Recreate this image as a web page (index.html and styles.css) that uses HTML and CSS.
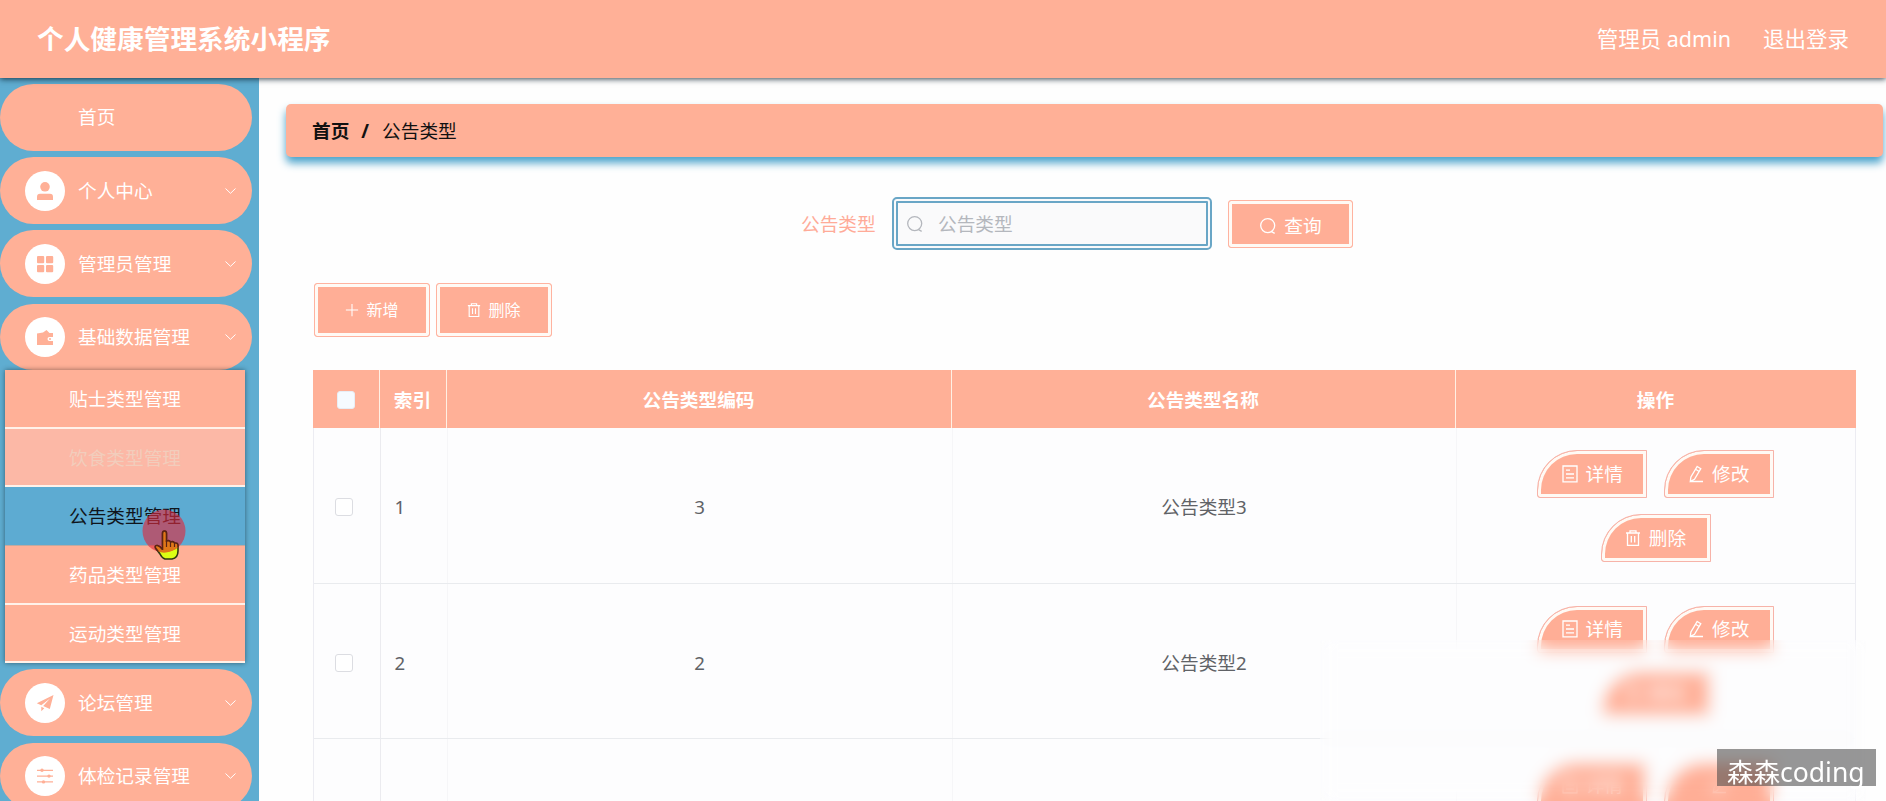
FILE: index.html
```
<!DOCTYPE html>
<html lang="zh-CN">
<head>
<meta charset="utf-8">
<title>个人健康管理系统小程序</title>
<link rel="stylesheet" href="styles.css">
</head>
<body>
<svg class="defs" width="0" height="0">
  <symbol id="down" viewBox="0 0 12 8"><path d="M1 1.500l5 4.800 5-4.800" fill="none" stroke="currentColor" stroke-width="1"/></symbol>
  <symbol id="search" viewBox="0 0 18 18"><circle cx="8.700" cy="8.600" r="7" fill="none" stroke="currentColor" stroke-width="1.300"/><path d="M12.500 14.700l3.200 1.600" stroke="currentColor" stroke-width="1.400"/></symbol>
  <symbol id="trash" viewBox="0 0 16 18"><path d="M1 4h14M5 4V1.800h6V4M2.500 4v12.400h11V4M6.300 7v6.500M9.700 7v6.500" fill="none" stroke="currentColor" stroke-width="1.300"/></symbol>
  <symbol id="doc" viewBox="0 0 16 18"><path d="M1 1h14v15.800H1zM4 5.200h4M4 9h8M4 12.800h8" fill="none" stroke="currentColor" stroke-width="1.300"/></symbol>
  <symbol id="edit" viewBox="0 0 16 18"><path d="M9.200 1.500l3.600 2.200-6.300 10.600-4.200 2 .6-4.300zM7.600 4.200l3.600 2.300M2 16.500h13" fill="none" stroke="currentColor" stroke-width="1.300"/></symbol>
</svg>
<header class="header">
  <h1 class="brand">个人健康管理系统小程序</h1>
  <div class="account"><span>管理员 admin</span><span>退出登录</span></div>
</header>
<div class="body">
  <nav class="sidebar">
    <a class="item"><span class="badge empty"></span><span class="name">首页</span></a>
    <a class="item"><span class="badge"><svg viewBox="0 0 18 18"><circle cx="9" cy="4.800" r="4.800"/><path d="M1 18v-3.200q0-3 3-3h10q3 0 3 3V18z"/></svg></span><span class="name">个人中心</span><svg class="arrow"><use href="#down"/></svg></a>
    <a class="item"><span class="badge"><svg viewBox="0 0 18 18"><rect x="1" y="1" width="7.200" height="7.200" rx="1"/><rect x="10" y="1" width="7.200" height="7.200" rx="1"/><rect x="1" y="10" width="7.200" height="7.200" rx="1"/><rect x="10" y="10" width="7.200" height="7.200" rx="1"/></svg></span><span class="name">管理员管理</span><svg class="arrow"><use href="#down"/></svg></a>
    <a class="item"><span class="badge"><svg viewBox="0 0 18 18"><path d="M1 5.500l6-1L10.500 2l3 3H17v4h-3.500a2 2 0 0 0 0 4H17v4H1z"/><circle cx="14" cy="11" r="1"/></svg></span><span class="name">基础数据管理</span><svg class="arrow"><use href="#down"/></svg></a>
    <div class="submenu">
      <a class="sub">贴士类型管理</a>
      <a class="sub fading">饮食类型管理</a>
      <a class="sub active">公告类型管理</a>
      <a class="sub">药品类型管理</a>
      <a class="sub">运动类型管理</a>
    </div>
    <a class="item"><span class="badge"><svg viewBox="0 0 18 18"><path d="M17.500 1L.8 9.300l4.500 2L14 4.500 7.200 12l6.600 3zM5.300 12.700v4.500l3-3z"/></svg></span><span class="name">论坛管理</span><svg class="arrow"><use href="#down"/></svg></a>
    <a class="item"><span class="badge"><svg viewBox="0 0 18 18"><path d="M1 2.700h16v1.200H1zM1 8.500h16v1.200H1zM1 14.300h16v1.200H1z"/><circle cx="6" cy="3.300" r="1.700"/><circle cx="13" cy="9.100" r="1.700"/><circle cx="7.500" cy="14.900" r="1.700"/></svg></span><span class="name">体检记录管理</span><svg class="arrow"><use href="#down"/></svg></a>
  </nav>
  <main class="main">
    <div class="crumbs"><b>首页</b><b class="slash">/</b><span>公告类型</span></div>
    <div class="filter">
      <label class="label">公告类型</label>
      <div class="field"><svg class="glyph"><use href="#search"/></svg><span>公告类型</span></div>
      <button class="btn query"><svg class="glyph"><use href="#search"/></svg>查询</button>
    </div>
    <div class="tools">
      <button class="btn tool"><svg class="ic" viewBox="0 0 16 16"><path d="M8 1v14M1 8h14" stroke="currentColor" stroke-width="1.200"/></svg>新增</button>
      <button class="btn tool"><svg class="ic"><use href="#trash"/></svg>删除</button>
    </div>
    <div class="table">
      <div class="row head"><div><i class="check"></i></div><div>索引</div><div>公告类型编码</div><div>公告类型名称</div><div>操作</div></div>
      <div class="row">
        <div><i class="check"></i></div><div class="index">1</div><div>3</div><div>公告类型3</div>
        <div class="ops"><button class="btn op"><svg class="ic"><use href="#doc"/></svg>详情</button><button class="btn op"><svg class="ic"><use href="#edit"/></svg>修改</button><button class="btn op"><svg class="ic"><use href="#trash"/></svg>删除</button></div>
      </div>
      <div class="row">
        <div><i class="check"></i></div><div class="index">2</div><div>2</div><div>公告类型2</div>
        <div class="ops"><button class="btn op"><svg class="ic"><use href="#doc"/></svg>详情</button><button class="btn op"><svg class="ic"><use href="#edit"/></svg>修改</button><button class="btn op"><svg class="ic"><use href="#trash"/></svg>删除</button></div>
      </div>
      <div class="row">
        <div></div><div></div><div></div><div></div>
        <div class="ops"><button class="btn op"><svg class="ic"><use href="#doc"/></svg>详情</button><button class="btn op"><svg class="ic"><use href="#edit"/></svg></button></div>
      </div>
    </div>
  </main>
</div>
<div class="frost"></div>
<div class="watermark">森森coding</div>
<div class="pointer">
  <svg viewBox="0 0 44 54" width="44" height="54">
    <defs><clipPath id="disc"><circle cx="22" cy="22" r="21.500"/></clipPath></defs>
    <path d="M20.500 41V24.500q0-2.500 2-2.500t2 2.500V32q3-1 4 1 3-1 4 1 3.500-.5 3.500 2.500V42q0 7-6 8h-7q-3-1-5-5l-4.500-6q-1-3 2-2.500 2.500.5 5 4z" fill="#dcff14" stroke="#2c3a10" stroke-width="1.600"/>
    <circle cx="22" cy="22" r="21.500" fill="#e0283c" fill-opacity=".62"/>
    <g clip-path="url(#disc)"><path d="M20.500 41V24.500q0-2.500 2-2.500t2 2.500V32q3-1 4 1 3-1 4 1 3.500-.5 3.500 2.500V42q0 7-6 8h-7q-3-1-5-5l-4.500-6q-1-3 2-2.500 2.500.5 5 4z" fill="#e07818" stroke="#5a2414" stroke-width="1.600"/></g>
    <path d="M24.500 31v7M28.500 33v5M32.500 34v4" stroke="#5a2414" stroke-width="1.200"/>
  </svg>
</div>
</body>
</html>
```
FILE: styles.css
```
* { box-sizing: border-box; }
body {
  margin: 0;
  height: 801px;
  overflow: hidden;
  background: #fefefe;
  color: #606266;
  font: 18.67px/28px "Noto Sans", "Noto Sans CJK SC", sans-serif;
}
.defs { position: absolute; }

.header {
  position: relative;
  z-index: 2;
  height: 78px;
  padding: 0 37px 1px;
  display: flex;
  align-items: center;
  justify-content: space-between;
  background: #ffb097;
  color: #fff;
  box-shadow: 0 1px 6px rgba(0, 20, 35, .8);
}
.brand { margin: 0; font-size: 26.7px; line-height: 40px; font-weight: 700; }
.account { display: flex; gap: 32px; font-size: 21.500px; }

.body { display: flex; height: 723px; overflow: hidden; }
.sidebar { width: 258.500px; flex: none; padding-top: 6.300px; background: #5fadd1; color: #fff; }
.item {
  display: flex;
  align-items: center;
  width: 252px;
  height: 66.300px;
  margin-bottom: 6.800px;
  padding: 0 15px 0 25px;
  border-radius: 34px;
  background: #ffb097;
}
.badge {
  width: 40px;
  height: 40px;
  margin-right: 13px;
  border-radius: 50%;
  background: #fff;
  display: grid;
  place-items: center;
}
.badge.empty { visibility: hidden; }
.badge svg { width: 18px; height: 18px; fill: #ffb097; }
.arrow { width: 13px; height: 8px; margin-left: auto; }
.submenu {
  position: relative;
  width: 240px;
  margin: -6.500px 0 6.300px 5px;
  box-shadow: 0 0 5px rgba(0, 0, 0, .45);
}
.sub {
  display: block;
  height: 58.600px;
  line-height: 58px;
  text-align: center;
  background: #ffb097;
  border-bottom: 2px solid #fff2ea;
}
.sub.fading { background: #fcb8a6; color: #f2cdbc; }
.sub.active { background: #5dabd2; color: #10151c; border-bottom-color: #c2a99f; border-bottom-width: 1px; }

.main { flex: 1; min-width: 0; padding: 26px 3px 0 27.500px; }
.crumbs {
  display: flex;
  align-items: center;
  height: 53px;
  padding-left: 26px;
  border-radius: 5px;
  background: #ffb097;
  color: #111;
  box-shadow: 0 6px 8px #4ba3cb;
}
.slash { margin: 0 13px 0 12px; }
.filter {
  display: flex;
  justify-content: center;
  height: 53px;
  margin: 40px 25px 0 0;
  padding-left: 10px;
}
.label { width: 91px; line-height: 53px; color: #ffab98; }
.field {
  display: flex;
  align-items: center;
  gap: 14px;
  width: 320px;
  margin-right: 16px;
  padding-left: 8px;
  border: 6px double #69a6c6;
  border-radius: 5px;
  background: #fafafb;
  color: #b4b7bd;
}
.glyph { width: 18px; height: 18px; }
.btn {
  display: flex;
  align-items: center;
  justify-content: center;
  padding: 0;
  font: inherit;
  color: #fff;
  background: #ffae96;
  border: 1.300px solid #ffb3a0;
  border-radius: 3px;
  box-shadow: inset 0 0 0 3px #fffaf5;
}
.query { width: 125px; height: 48px; margin-top: 3px; gap: 7px; padding-top: 4px; }
.tools { display: flex; gap: 6px; margin: 32.500px 0 0 28px; }
.tool { width: 116px; height: 54px; gap: 7px; font-size: 16px; }
.ic { width: 16px; height: 18px; }
.tool .ic { width: 14px; height: 16px; }

.table { width: 1543px; margin: 33.500px 0 0 26.500px; border: solid #ececf2; border-width: 0 1px; background: #fdfdfe; }
.row {
  display: grid;
  grid-template-columns: 67px 67px 505px 504px 1fr;
  height: 155.500px;
  border-bottom: 1px solid #e9ebee;
  text-align: center;
}
.row > div { display: flex; align-items: center; justify-content: center; padding-top: 4px; border-right: 1px solid #f6f6f8; }
.row > div:nth-child(1) { border-right-color: #ebebef; }
.row > div:last-child { border-right: 0; }
.head { height: 58px; margin: 0 -1px; background: #ffb097; color: #fff; font-weight: 700; border: 0; }
.head > div, .head > div:nth-child(1) { padding-top: 1px; border-right-color: #fff0e4; }
.row > .index { justify-content: flex-start; padding-left: 14px; }
.check { width: 18px; height: 18px; border: 1px solid #dcdde2; border-radius: 3px; background: #fff; margin-right: 5px; }
.head .check { margin-right: 0; background: #f6fbff; border-color: #e8eef5; }
.row > .ops { flex-wrap: wrap; align-content: flex-start; gap: 16.500px; padding: 22px 40px 0; }
.op { width: 110px; height: 47.500px; gap: 8px; border-radius: 40px 0 0 3px; border-color: #f7b3a9; }

.frost {
  position: absolute;
  left: 1320px;
  top: 640px;
  width: 546px;
  height: 161px;
  backdrop-filter: blur(8px);
}
.watermark {
  position: absolute;
  left: 1717px;
  top: 749px;
  width: 159px;
  height: 37px;
  padding-left: 10px;
  background: rgba(70, 70, 70, .56);
  color: #fff;
  font-size: 26.500px;
  line-height: 46px;
  white-space: nowrap;
}
.pointer { position: absolute; left: 142px; top: 509px; z-index: 3; }
```
